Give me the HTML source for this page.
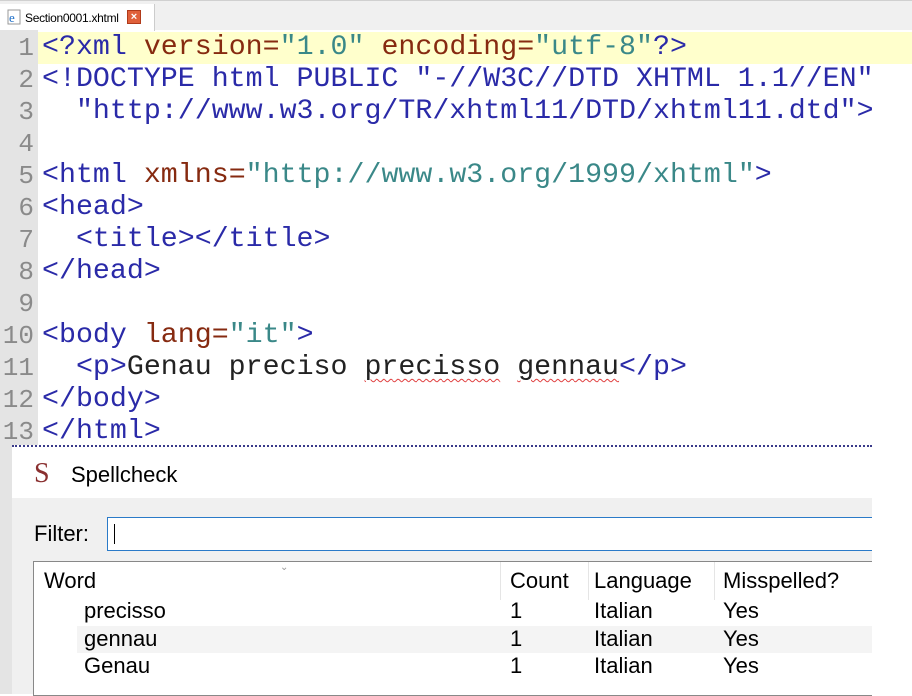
<!DOCTYPE html>
<html><head><style>
body{margin:0;width:912px;height:694px;overflow:hidden;background:#fff;position:relative;font-family:"Liberation Sans",sans-serif}
.tabbar{position:absolute;left:0;top:0;width:912px;height:30px;background:#f0f0f0;border-top:1px solid #d0d0d0;box-sizing:border-box}
.tab{position:absolute;left:0;top:3px;width:154px;height:27px;background:#fff;border-right:1px solid #ccc}
.tab span{position:absolute;left:25px;top:7px;font-size:12px;color:#000;letter-spacing:-0.3px}
.gut{position:absolute;left:0;top:30px;width:38px;height:664px;background:#e4e4e4}
.ln{position:absolute;left:0;width:34px;text-align:right;font-family:"Liberation Mono",monospace;font-size:26px;color:#8a8a8a;line-height:32px}
.code{position:absolute;left:42px;font-family:"Liberation Mono",monospace;font-size:28px;line-height:32px;white-space:pre;color:#2a2aa8;transform:scaleX(1.01);transform-origin:left}
.a{color:#862a10}.v{color:#3a8888}
.hl{position:absolute;left:38px;top:32px;width:874px;height:32px;background:#ffffcc}
.sq{text-decoration:underline wavy #e04040;text-decoration-thickness:1px;text-underline-offset:4px}
.panel{position:absolute;left:12px;top:451px;width:860px;height:243px;background:#f0f0f0;font-size:22px}
.ptitle{position:absolute;left:0;top:0;width:860px;height:47px;background:#fff}
</style></head><body>
<div class="tabbar"><div class="tab">
<svg style="position:absolute;left:6px;top:4px" width="16" height="18"><rect x="2" y="2" width="12" height="14" fill="#fff" stroke="#999"/><text x="3" y="14" font-size="13" fill="#1e6fc8" font-family="Liberation Serif">e</text></svg>
<span>Section0001.xhtml</span>
<div style="position:absolute;left:127px;top:6px;width:14px;height:14px;background:#e0603a;border:1px solid #b03a1a;box-sizing:border-box;color:#fff;font-size:11px;line-height:12px;text-align:center;font-weight:bold">×</div>
</div></div>
<div class="gut"></div>
<div class="hl"></div>
<div class="ln" style="top:32px">1</div><div class="ln" style="top:64px">2</div><div class="ln" style="top:96px">3</div><div class="ln" style="top:128px">4</div><div class="ln" style="top:160px">5</div><div class="ln" style="top:192px">6</div><div class="ln" style="top:224px">7</div><div class="ln" style="top:256px">8</div><div class="ln" style="top:288px">9</div><div class="ln" style="top:320px">10</div><div class="ln" style="top:352px">11</div><div class="ln" style="top:384px">12</div><div class="ln" style="top:416px">13</div>
<div class="code" style="top:32px">&lt;?xml <span class="a">version=</span><span class="v">"1.0"</span> <span class="a">encoding=</span><span class="v">"utf-8"</span>?&gt;
&lt;!DOCTYPE html PUBLIC "-//W3C//DTD XHTML 1.1//EN"
  "http://www.w3.org/TR/xhtml11/DTD/xhtml11.dtd"&gt;

&lt;html <span class="a">xmlns=</span><span class="v">"http://www.w3.org/1999/xhtml"</span>&gt;
&lt;head&gt;
  &lt;title&gt;&lt;/title&gt;
&lt;/head&gt;

&lt;body <span class="a">lang=</span><span class="v">"it"</span>&gt;
  &lt;p&gt;<span style="color:#222">Genau preciso <span class="sq">precisso</span> <span class="sq">gennau</span></span>&lt;/p&gt;
&lt;/body&gt;
&lt;/html&gt;</div>
<div style="position:absolute;left:0;top:448px;width:12px;height:246px;background:#e4e4e4"></div>
<div style="position:absolute;left:12px;top:445px;width:860px;height:6px;background:#fff;border-top:2px dotted #3a3a8a;box-sizing:border-box"></div>
<div class="panel">
<div class="ptitle">
<div style="position:absolute;left:22px;top:8px;font-family:'Liberation Serif',serif;font-size:28px;color:#8a3030;line-height:30px">S</div>
<div style="position:absolute;left:59px;top:11px;color:#000">Spellcheck</div>
</div>
<div style="position:absolute;left:22px;top:70px">Filter:</div>
<div style="position:absolute;left:95px;top:66px;width:765px;height:34px;background:#fff;border:1px solid #2a7ac8;border-right:none;box-sizing:border-box"><div style="position:absolute;left:6px;top:6px;width:1px;height:20px;background:#000"></div></div>
<div style="position:absolute;left:21px;top:110px;width:839px;height:135px;background:#fff;border:1px solid #888;border-right:none;box-sizing:border-box;overflow:hidden">
<div style="position:absolute;left:246px;top:0px;color:#999;font-size:10px">⌄</div>
<div style="position:absolute;left:10px;top:6px">Word</div>
<div style="position:absolute;left:466px;top:0;width:1px;height:38px;background:#e5e5e5"></div>
<div style="position:absolute;left:476px;top:6px">Count</div>
<div style="position:absolute;left:554px;top:0;width:1px;height:38px;background:#e5e5e5"></div>
<div style="position:absolute;left:560px;top:6px">Language</div>
<div style="position:absolute;left:680px;top:0;width:1px;height:38px;background:#e5e5e5"></div>
<div style="position:absolute;left:689px;top:6px">Misspelled?</div>
<div style="position:absolute;left:43px;top:64px;width:800px;height:27px;background:#f4f4f4"></div>
<div style="position:absolute;left:50px;top:36px">precisso</div><div style="position:absolute;left:476px;top:36px">1</div><div style="position:absolute;left:560px;top:36px">Italian</div><div style="position:absolute;left:689px;top:36px">Yes</div>
<div style="position:absolute;left:50px;top:64px">gennau</div><div style="position:absolute;left:476px;top:64px">1</div><div style="position:absolute;left:560px;top:64px">Italian</div><div style="position:absolute;left:689px;top:64px">Yes</div>
<div style="position:absolute;left:50px;top:91px">Genau</div><div style="position:absolute;left:476px;top:91px">1</div><div style="position:absolute;left:560px;top:91px">Italian</div><div style="position:absolute;left:689px;top:91px">Yes</div>
</div>
</div>
</body></html>
